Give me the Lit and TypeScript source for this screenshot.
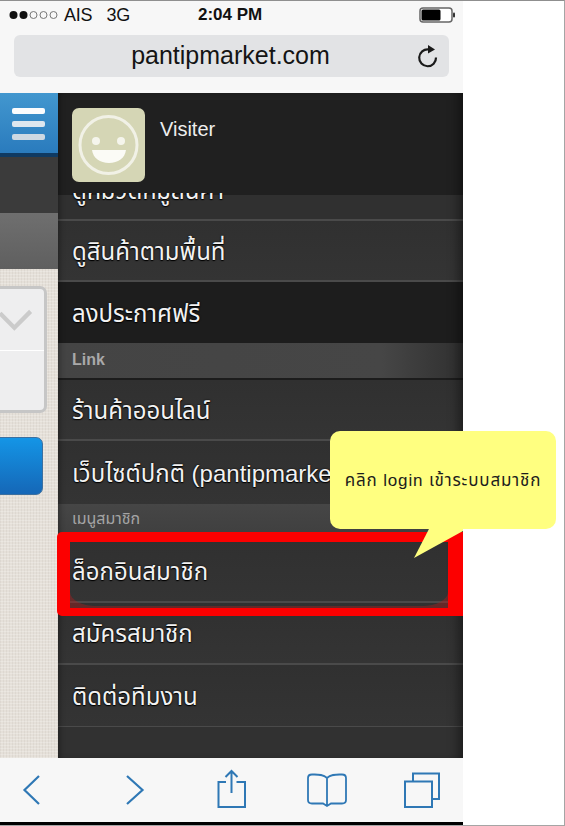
import { LitElement, html, css, svg } from "lit";
import { customElement } from "lit/decorators.js";

const THAI = `"Liberation Sans", "Noto Sans Thai", "Noto Sans Thai UI", "Noto Sans", "DejaVu Sans", sans-serif`;

@customElement("app-root")
export class AppRoot extends LitElement {
  static styles = css`
    :host {
      display: block;
      width: 565px;
      height: 826px;
      overflow: hidden;
      font-family: "Liberation Sans", sans-serif;
    }
    .page {
      position: relative;
      width: 565px;
      height: 826px;
      box-sizing: border-box;
      background: #fff;
      border-top: 1px solid #8f8f8f;
      border-right: 1px solid #a5a5a5;
      border-bottom: 1px solid #a5a5a5;
      overflow: hidden;
    }
    .phone {
      width: 463px;
      height: 826px;
      margin-top: -1px;
      display: flex;
      flex-direction: column;
    }
    .chrome {
      height: 93px;
      background: #f7f7f7;
      display: flex;
      flex-direction: column;
      flex: none;
    }
    .status {
      height: 35px;
      box-sizing: border-box;
      padding: 0 9px 5px;
      display: flex;
      align-items: center;
      position: relative;
      color: #111;
      font-size: 18px;
      letter-spacing: -0.2px;
    }
    .dots { display: block; margin-right: 5px; }
    .net { margin-left: 14px; }
    .time {
      position: absolute;
      left: 198px;
      font-weight: 700;
      font-size: 17px;
      letter-spacing: 0;
    }
    .battery { position: absolute; left: 419px; top: 7px; }
    .url {
      margin: 0 14px;
      height: 42px;
      background: #e2e3e5;
      border-radius: 6px;
      position: relative;
      display: flex;
      align-items: center;
      justify-content: center;
      font-size: 25px;
      color: #141414;
      padding-bottom: 1px;
      box-sizing: border-box;
    }
    .url span { position: relative; left: -1px; }
    .reload { position: absolute; right: 9px; top: 9px; }
    .body { flex: 1; display: flex; min-height: 0; }
    .side {
      width: 58px;
      flex: none;
      overflow: hidden;
      display: flex;
      flex-direction: column;
      background-color: #e5e0d9;
      background-image:
        repeating-linear-gradient(0deg, rgba(255,255,255,.22) 0 1px, transparent 1px 3px),
        repeating-linear-gradient(90deg, rgba(150,140,130,.1) 0 1px, transparent 1px 3px);
    }
    .menu-btn {
      height: 45px;
      flex: none;
      background: linear-gradient(#4297cf, #2a7bbd);
      border-bottom: 4px solid #0f3a62;
      display: flex;
      flex-direction: column;
      gap: 7px;
      padding: 15px 13px 0 12px;
      box-sizing: content-box;
    }
    .menu-btn i { display: block; height: 6px; border-radius: 2px; background: #fbfcfd; }
    .menu-btn i:nth-child(2) { background: #dde7ef; }
    .menu-btn i:nth-child(3) { background: #cdd8e2; }
    .bar1 { height: 56px; flex: none; background: #3b3b3b; }
    .bar2 { height: 56px; flex: none; background: linear-gradient(#6f6f6f, #5f5f5f); }
    .card {
      flex: none;
      margin: 17px 11px 0 -12px;
      height: 127px;
      box-sizing: border-box;
      background: #eeeeef;
      border: 3px solid #c6c6c6;
      border-radius: 7px;
      display: flex;
      flex-direction: column;
    }
    .card-top { height: 61px; flex: none; border-bottom: 1px solid #fff; display: flex; }
    .card-top svg { display: block; margin: 19px 0 0 9px; }
    .btn {
      flex: none;
      margin: 24px 15px 0 -12px;
      height: 58px;
      box-sizing: border-box;
      border: 1px solid #3b6f9f;
      border-radius: 7px;
      background: linear-gradient(#1495e6, #1567b7);
    }
    .panel {
      flex: 1;
      min-width: 0;
      background: #313131;
      display: flex;
      flex-direction: column;
      color: #f4f4f4;
      overflow: hidden;
      position: relative;
    }
    .panel::after {
      content: "";
      position: absolute;
      inset: 0;
      box-shadow: inset -12px 0 12px -8px rgba(0,0,0,.45), inset 5px 0 6px -4px rgba(0,0,0,.4);
      pointer-events: none;
    }
    .head {
      height: 100px;
      flex: none;
      background: #202020;
      display: flex;
      gap: 15px;
      padding: 15px 0 0 14px;
      box-sizing: border-box;
    }
    .avatar { display: block; flex: none; }
    .name { font-size: 20px; color: #eee; margin-top: 10px; }
    .list { flex: 1; min-height: 0; overflow: hidden; display: flex; flex-direction: column; }
    .row {
      height: 61px;
      flex: none;
      box-sizing: border-box;
      display: flex;
      align-items: center;
      padding: 4px 0 0 14px;
      font-family: ${css([THAI] as any)};
      font-size: 24px;
      white-space: nowrap;
      border-bottom: 2px solid #4a4a4a;
      background: linear-gradient(#303030, #343434);
      text-shadow: 0 0 2px #000, 0 1px 1px #000;
      color: #f2f2f2;
    }
    .row.first {
      margin-top: -33px;
      background: linear-gradient(#202020 0 35px, #303030 35px);
    }
    .row.dark { background: #1d1d1d; border-bottom: 0; }
    .row.web { height: 63px; border-bottom: 0; }
    .row.m { height: 62px; }
    .row.m.end { border-bottom-width: 1px; }
    .sec {
      height: 37px;
      flex: none;
      box-sizing: border-box;
      display: flex;
      align-items: center;
      padding: 0 0 2px 14px;
      font-family: ${css([THAI] as any)};
      font-weight: 700;
      font-size: 16px;
      color: #a9a9a9;
      background: linear-gradient(90deg, #444, #464646 80%, #303030);
      border-bottom: 2px solid #1c1c1c;
    }
    .sec.member {
      font-weight: 400;
      color: #a5a5a5;
      padding: 0 0 7px 14px;
      border-bottom: 0;
      background: linear-gradient(#464646, #3e3e3e);
    }
    .tools { height: 64px; flex: none; background: #f7f7f7; display: block; }
    .tools svg { display: block; }
    .floor { height: 4px; flex: none; background: #000; }
    .frame {
      position: absolute;
      left: 57px;
      top: 531px;
      width: 406px;
      height: 84px;
      box-sizing: border-box;
      border-style: solid;
      border-color: #fc0000;
      border-width: 10px 15px 8px 13px;
      border-radius: 5px 0 0 5px;
      overflow: hidden;
    }
    .frame i {
      position: absolute;
      inset: 0 0 2px 0;
      border-radius: 0 0 26px 26px / 0 0 14px 14px;
      box-shadow: 0 0 0 40px rgba(190,30,30,.38);
    }
    .tail { position: absolute; left: 410px; top: 526px; display: block; }
    .note {
      position: absolute;
      left: 330px;
      top: 430px;
      width: 226px;
      height: 98px;
      background: #ffff80;
      border-radius: 10px;
      box-sizing: border-box;
      display: flex;
      align-items: center;
      justify-content: center;
      padding-top: 2px;
      font-family: ${css([THAI] as any)};
      font-size: 17px;
      letter-spacing: 0.85px;
      color: #1c1c1c;
      white-space: nowrap;
    }
  `;

  render() {
    const blue = "#2f78b5";
    return html`
      <div class="page">
        <div class="phone">
          <div class="chrome">
            <div class="status">
              <svg class="dots" width="50" height="12" viewBox="0 0 50 12">
                <circle cx="4.5" cy="6" r="4" fill="#111" />
                <circle cx="14.5" cy="6" r="4" fill="#111" />
                <circle cx="24.5" cy="6" r="3.5" fill="none" stroke="#777" />
                <circle cx="34.5" cy="6" r="3.5" fill="none" stroke="#777" />
                <circle cx="44.5" cy="6" r="3.5" fill="none" stroke="#777" />
              </svg>
              <span>AIS</span><span class="net">3G</span>
              <span class="time">2:04 PM</span>
              <svg class="battery" width="38" height="16" viewBox="0 0 38 16">
                <rect x="1" y="1" width="32" height="14" rx="3" fill="#fff" stroke="#666" stroke-width="1.5" />
                <rect x="2.5" y="2.5" width="19" height="11" rx="1.5" fill="#000" />
                <rect x="34" y="5.5" width="2" height="5" rx="1" fill="#333" />
              </svg>
            </div>
            <div class="url">
              <span>pantipmarket.com</span>
              <svg class="reload" width="24" height="24" viewBox="0 0 24 24">
                <path d="M12.5 5.5 A8.4 8.4 0 1 0 20 13.5" fill="none" stroke="#1a1a1a" stroke-width="2.2" />
                <path d="M12 1 L19 5.5 L12 9.5 Z" fill="#1a1a1a" />
              </svg>
            </div>
          </div>
          <div class="body">
            <div class="side">
              <div class="menu-btn"><i></i><i></i><i></i></div>
              <div class="bar1"></div>
              <div class="bar2"></div>
              <div class="card">
                <div class="card-top">
                  <svg width="46" height="24" viewBox="0 0 46 24">
                    <path d="M0 5 L15 20 L32 3" fill="none" stroke="#cbcbcb" stroke-width="4.5" />
                  </svg>
                </div>
              </div>
              <div class="btn"></div>
            </div>
            <div class="panel">
              <div class="head">
                <svg class="avatar" width="73" height="74" viewBox="0 0 73 74">
                  <rect width="73" height="74" rx="7" fill="#d5d6b5" />
                  <circle cx="36.5" cy="37" r="28.5" fill="none" stroke="#f1f1e6" stroke-width="3" />
                  <circle cx="24" cy="33" r="4" fill="#f5f5ec" />
                  <circle cx="49" cy="33" r="4" fill="#f5f5ec" />
                  <path d="M20 42 H54 C53 50 46 55 37 55 C28 55 21 50 20 42 Z" fill="#fbfbf6" />
                </svg>
                <div class="name">Visiter</div>
              </div>
              <div class="list">
                <div class="row first">ดูหมวดหมู่สินค้า</div>
                <div class="row">ดูสินค้าตามพื้นที่</div>
                <div class="row dark">ลงประกาศฟรี</div>
                <div class="sec">Link</div>
                <div class="row">ร้านค้าออนไลน์</div>
                <div class="row web">เว็บไซต์ปกติ (pantipmarket.com)</div>
                <div class="sec member">เมนูสมาชิก</div>
                <div class="row m">ล็อกอินสมาชิก</div>
                <div class="row m">สมัครสมาชิก</div>
                <div class="row m end">ติดต่อทีมงาน</div>
              </div>
            </div>
          </div>
          <div class="tools">
            <svg width="463" height="64" viewBox="0 758 463 64">
              ${svg`
              <g fill="none" stroke="${blue}" stroke-width="2.2">
                <path d="M39 776 L24.5 790 L39 804" />
                <path d="M127 776 L142.5 790 L127 804" />
                <path d="M226 782 H218.5 V807 H245 V782 H236.5" stroke-width="2" />
                <path d="M231.5 793 V772 M225.5 777 L231.5 771 L237.5 777" stroke-width="2" />
                <path d="M327 778 C323 774 318 774.5 312 774.5 C309 774.5 308 776 308 778 V800 C308 802.5 309 803.5 312 803.5 H323 L327 806 L331 803.5 H342 C345 803.5 346 802.5 346 800 V778 C346 776 345 774.5 342 774.5 C336 774.5 331 774 327 778 V806" stroke-width="1.8" />
                <rect x="405" y="781.5" width="27" height="25.5" stroke-width="2" />
                <path d="M413 781 V773.5 H439 V799 H432" stroke-width="2" />
              </g>`}
            </svg>
          </div>
          <div class="floor"></div>
        </div>
        <div class="frame"><i></i></div>
        <div class="note">คลิก login เข้าระบบสมาชิก</div>
        <svg class="tail" width="54" height="33" viewBox="0 0 54 33">
          <path d="M20 0 H53 V4 L4 31 Z" fill="#ffff80" />
        </svg>
      </div>
    `;
  }
}
